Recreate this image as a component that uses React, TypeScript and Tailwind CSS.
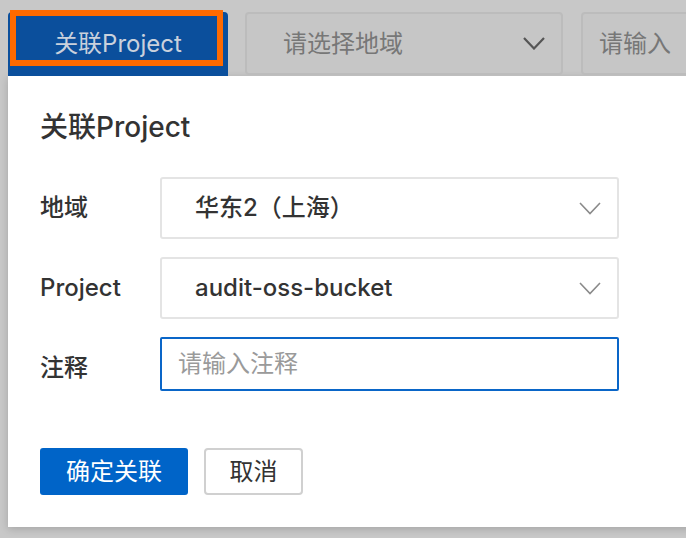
import React from "react";

const FONT = { fontFamily: 'Inter, "Noto Sans CJK SC", sans-serif' };

function Chevron({ className, strokeWidth }: { className: string; strokeWidth: number }) {
  return (
    <svg viewBox="0 0 22 13" className={className} fill="none">
      <path d="M1 1 L11 11.5 L21 1" stroke="currentColor" strokeWidth={strokeWidth} strokeLinejoin="miter" />
    </svg>
  );
}

function SelectBox({ value }: { value: string }) {
  return (
    <div className="flex h-[62px] w-[459px] items-center justify-between rounded-[3px] border-2 border-[#e4e4e4] bg-white pl-[33px] pr-[16px]">
      <span className="text-[24px] font-medium text-[#333333]">{value}</span>
      <Chevron className="h-[13px] w-[22px] text-[#8a8a8a]" strokeWidth={1.6} />
    </div>
  );
}

function FormRow({ label, children }: { label: string; children: React.ReactNode }) {
  return (
    <div className="flex h-[62px] items-start">
      <div className="flex h-[62px] w-[120px] items-center text-[24px] font-medium text-[#333333]">{label}</div>
      {children}
    </div>
  );
}

export default function App() {
  return (
    <div className="relative h-[538px] w-[686px] overflow-hidden bg-[#c8c8c8]" style={FONT}>
      {/* toolbar behind the overlay */}
      <div className="flex items-start pl-2 pt-3">
        <div className="flex h-16 w-[220px] shrink-0 items-center justify-center rounded-t-[4px] bg-[#0b4f9c] text-[24px] text-[#c9d1dc]">
          关联Project
        </div>
        <div className="ml-[17px] flex h-[63px] w-[318px] shrink-0 items-center justify-between rounded-[4px] border-2 border-[#bcbcbc] bg-[#c6c6c6] pl-[36px] pr-[16px]">
          <span className="text-[24px] text-[#777777]">请选择地域</span>
          <Chevron className="h-[13px] w-[22px] text-[#555555]" strokeWidth={2.2} />
        </div>
        <div className="ml-[18px] flex h-[63px] w-[140px] shrink-0 items-center rounded-[4px] border-2 border-[#bcbcbc] bg-[#c6c6c6] pl-[16px]">
          <span className="text-[24px] text-[#777777]">请输入</span>
        </div>
      </div>

      {/* popover */}
      <div className="ml-2 h-[451px] w-[700px] bg-white pl-8 pt-[31px] shadow-[0_2px_8px_rgba(0,0,0,0.18)]">
        <div className="h-10 text-[28px] font-medium leading-10 text-[#333333]">关联Project</div>

        <div className="mt-[30px] flex flex-col gap-[18px]">
          <FormRow label="地域">
            <SelectBox value="华东2（上海）" />
          </FormRow>
          <FormRow label="Project">
            <SelectBox value="audit-oss-bucket" />
          </FormRow>
          <FormRow label="注释">
            <div className="flex h-[54px] w-[459px] items-center rounded-[2px] border-2 border-[#0a66c8] bg-white pl-4">
              <span className="text-[24px] text-[#9a9a9a]">请输入注释</span>
            </div>
          </FormRow>
        </div>

        <div className="mt-[49px] flex gap-4">
          <div className="flex h-[47px] w-[148px] items-center justify-center rounded-[3px] bg-[#0064c8] text-[24px] text-white">
            确定关联
          </div>
          <div className="flex h-[47px] w-[99px] items-center justify-center rounded-[4px] border-2 border-[#d0d0d0] bg-white text-[24px] text-[#333333]">
            取消
          </div>
        </div>
      </div>

      {/* highlight frame over the toolbar button */}
      <div className="absolute left-[10px] top-[10px] h-[56px] w-[213px] border-[6px] border-[#ff6a00]" />
    </div>
  );
}
